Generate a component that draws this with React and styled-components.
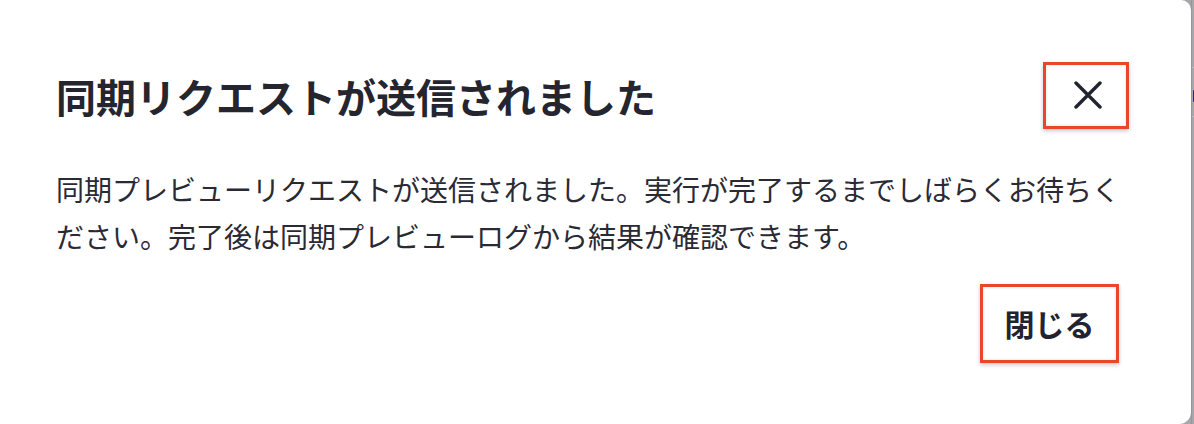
import styled, { createGlobalStyle } from "styled-components";

const GlobalStyle = createGlobalStyle`
  html, body {
    margin: 0;
    padding: 0;
    background: #a6a6ab;
    overflow: hidden;
  }
  * {
    box-sizing: border-box;
  }
`;

const CloseIcon = () => (
  <svg width="28" height="28" viewBox="0 0 28 28" fill="none">
    <path
      d="M2 2 L26 26 M26 2 L2 26"
      stroke="#23232f"
      strokeWidth="3.4"
      strokeLinecap="round"
    />
  </svg>
);

const App = () => {
  return (
    <>
      <GlobalStyle />
      <Screen>
        <Dialog>
          <Header>
            <Title>同期リクエストが送信されました</Title>
            <CloseButton aria-label="close">
              <CloseIcon />
            </CloseButton>
          </Header>
          <Message>
            同期プレビューリクエストが送信されました。実行が完了するまでしばらくお待ちください。完了後は同期プレビューログから結果が確認できます。
          </Message>
          <Footer>
            <TextButton>閉じる</TextButton>
          </Footer>
        </Dialog>
        <Backdrop>
          <Rule $top={67} />
          <Marker />
          <Rule $top={14} />
        </Backdrop>
      </Screen>
    </>
  );
};

const Screen = styled.div`
  display: flex;
  width: 1194px;
  height: 424px;
  background: #a6a6ab;
  font-family: "Noto Sans CJK JP", "Noto Sans", sans-serif;
  color: #23232f;
`;

const Dialog = styled.div`
  width: 1191px;
  height: 424px;
  background: #ffffff;
  border-radius: 0 10px 12px 0;
  padding: 62px 62px 0 56px;
  display: flex;
  flex-direction: column;
`;

const Header = styled.div`
  display: flex;
  align-items: center;
  justify-content: space-between;
  height: 67px;
`;

const Title = styled.h2`
  margin: 0;
  font-size: 40px;
  font-weight: 700;
  line-height: 56px;
  color: #25252f;
`;

const annotated = `
  border: 3px solid #e9472b;
  box-shadow: 0 2px 4px rgba(0, 0, 0, 0.22),
    inset 0 0 3px rgba(0, 0, 0, 0.14);
  background: #ffffff;
  cursor: pointer;
  display: flex;
  align-items: center;
  justify-content: center;
`;

const CloseButton = styled.button`
  ${annotated}
  width: 86px;
  height: 67px;
  padding: 0 0 1px 4px;
`;

const Message = styled.p`
  margin: 37px 0 0;
  font-size: 28px;
  line-height: 47px;
  font-weight: 400;
  color: #2a2a35;
`;

const Footer = styled.div`
  display: flex;
  justify-content: flex-end;
  padding-right: 10px;
  margin-top: 24px;
`;

const TextButton = styled.button`
  ${annotated}
  width: 139px;
  height: 79px;
  padding: 0 0 2px;
  font-family: "Noto Sans CJK JP", "Noto Sans", sans-serif;
  font-size: 30px;
  font-weight: 600;
  color: #23232f;
`;

const Backdrop = styled.div`
  flex: 1;
  display: flex;
  flex-direction: column;
  border-left: 1px solid #95959b;
`;

const Rule = styled.div`
  margin-top: ${(p) => p.$top}px;
  height: 1px;
  background: #b9b9be;
`;

const Marker = styled.div`
  margin-top: 22px;
  height: 12px;
  margin-left: 1px;
  background: #3a1b8c;
  border-radius: 6px 0 0 6px;
`;

export default App;
